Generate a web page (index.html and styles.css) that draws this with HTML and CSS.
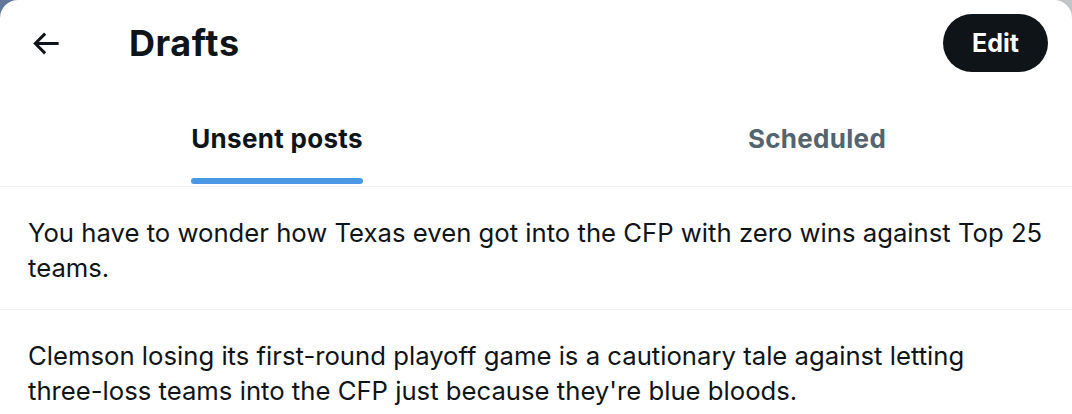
FILE: index.html
```html
<!DOCTYPE html>
<html lang="en">
<head>
<meta charset="utf-8">
<title>Drafts</title>
<link rel="stylesheet" href="styles.css">
</head>
<body>
<div class="panel">
  <header class="header">
    <div class="back">
      <svg class="back-icon" viewBox="0 0 24 24" aria-hidden="true"><path d="M7.414 13l5.043 5.04-1.414 1.42L3.586 12l7.457-7.46 1.414 1.42L7.414 11H21v2H7.414z"/></svg>
    </div>
    <h1 class="title">Drafts</h1>
    <button class="edit">Edit</button>
  </header>
  <nav class="tabs">
    <div class="tab active"><span class="tab-label">Unsent posts<span class="indicator"></span></span></div>
    <div class="tab"><span class="tab-label">Scheduled</span></div>
  </nav>
  <div class="draft">You have to wonder how Texas even got into the CFP with zero wins against Top 25 teams.</div>
  <div class="draft">Clemson losing its first-round playoff game is a cautionary tale against letting three-loss teams into the CFP just because they're blue bloods.</div>
</div>
</body>
</html>
```

FILE: styles.css
```css
html, body {
  margin: 0;
  padding: 0;
  height: 100%;
}
body {
  background: linear-gradient(to right, #62789a 0 50%, #c2c4c6 50% 100%);
  font-family: Inter, "Noto Sans", "Liberation Sans", sans-serif;
  color: #0f1419;
  overflow: hidden;
}
.panel {
  background: #ffffff;
  border-radius: 18px 18px 0 0;
  min-height: 100%;
  overflow: hidden;
}
.header {
  display: flex;
  align-items: center;
  height: 86px;
  padding: 0 24px 0 28px;
}
.back {
  width: 101px;
  display: flex;
  align-items: center;
}
.back-icon {
  width: 35px;
  height: 35px;
  fill: #0f1419;
}
.title {
  flex: 1;
  margin: 0;
  font-size: 36px;
  font-weight: 700;
  letter-spacing: 0.6px;
}
.edit {
  background: #0f1419;
  color: #ffffff;
  border: none;
  border-radius: 999px;
  height: 58px;
  width: 105px;
  font-family: inherit;
  font-size: 25px;
  font-weight: 700;
  padding: 0;
}
.tabs {
  display: grid;
  grid-template-columns: 540px 540px;
  height: 100px;
  border-bottom: 1px solid #eff3f4;
  padding-left: 7px;
}
.tab {
  display: flex;
  justify-content: center;
  align-items: stretch;
}
.tab-label {
  position: relative;
  display: flex;
  align-items: center;
  font-size: 26px;
  font-weight: 700;
  letter-spacing: 0.3px;
  color: #536471;
  padding-top: 4px;
}
.tab.active .tab-label {
  color: #0f1419;
}
.indicator {
  position: absolute;
  left: 0;
  right: 0;
  bottom: 2px;
  height: 6px;
  border-radius: 999px;
  background: #4a98e4;
}
.draft {
  padding: 28px 27px 24px 28px;
  font-size: 25.7px;
  line-height: 35px;
  border-bottom: 1px solid #eff3f4;
}
```
